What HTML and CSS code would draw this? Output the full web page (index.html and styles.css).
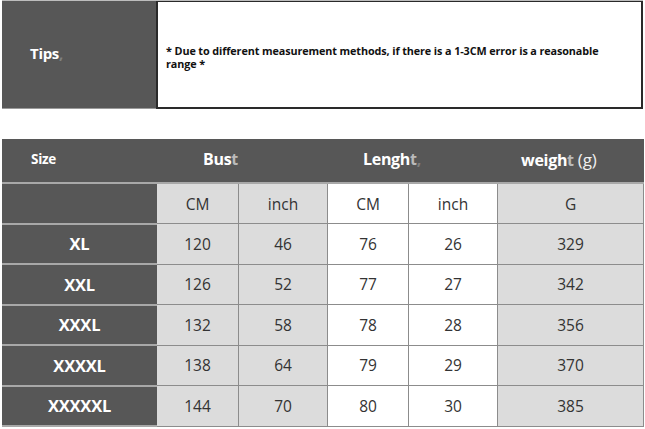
FILE: index.html
```html
<!DOCTYPE html>
<html>
<head>
<meta charset="utf-8">
<link rel="stylesheet" href="styles.css">
</head>
<body>
<div class="page">
  <div class="tips">
    <div class="tips-label">Tips<span class="faint">,</span></div>
    <div class="tips-text">* Due to different measurement methods, if there is a 1-3CM error is a reasonable range *</div>
  </div>
  <table class="chart">
    <colgroup>
      <col class="c-size"><col class="c-cm"><col class="c-in"><col class="c-cm2"><col class="c-in2"><col class="c-g">
    </colgroup>
    <tr class="head">
      <th class="size-h">Size</th>
      <th colspan="2" class="grp bust">Bus<span class="fade">t</span></th>
      <th colspan="2" class="grp len">Lengh<span class="fade">t</span><span class="faint">,</span></th>
      <th class="grp wt">weigh<span class="fade">t</span> <span class="unit">(g)</span></th>
    </tr>
    <tr>
      <td class="sz"></td><td class="grey">CM</td><td class="grey">inch</td><td class="white">CM</td><td class="white">inch</td><td class="grey">G</td>
    </tr>
    <tr>
      <td class="sz">XL</td><td class="grey">120</td><td class="grey">46</td><td class="white">76</td><td class="white">26</td><td class="grey">329</td>
    </tr>
    <tr>
      <td class="sz">XXL</td><td class="grey">126</td><td class="grey">52</td><td class="white">77</td><td class="white">27</td><td class="grey">342</td>
    </tr>
    <tr>
      <td class="sz">XXXL</td><td class="grey">132</td><td class="grey">58</td><td class="white">78</td><td class="white">28</td><td class="grey">356</td>
    </tr>
    <tr>
      <td class="sz">XXXXL</td><td class="grey">138</td><td class="grey">64</td><td class="white">79</td><td class="white">29</td><td class="grey">370</td>
    </tr>
    <tr>
      <td class="sz">XXXXXL</td><td class="grey">144</td><td class="grey">70</td><td class="white">80</td><td class="white">30</td><td class="grey">385</td>
    </tr>
  </table>
</div>
</body>
</html>
```

FILE: styles.css
```css
html, body {
  margin: 0;
  padding: 0;
  background: #ffffff;
}
body {
  font-family: "Open Sans", "Noto Sans", "DejaVu Sans", sans-serif;
  color: #333333;
}
.page {
  width: 645px;
  height: 429px;
  padding: 0 2px 0 2px;
  box-sizing: border-box;
  overflow: hidden;
}
.tips {
  display: grid;
  grid-template-columns: 154px 1fr;
  height: 109px;
  border-top: 1px solid #bdbdbd;
  box-sizing: border-box;
}
.tips-label {
  background: #575757;
  color: #ffffff;
  font-weight: 700;
  font-size: 15px;
  letter-spacing: -0.3px;
  display: flex;
  align-items: center;
  padding-left: 28px;
  padding-bottom: 4px;
  border-bottom: 1px solid #9a9a9a;
}
.tips-text {
  border: 2px solid #2a2a2a;
  border-top-width: 1px;
  background: #ffffff;
  color: #111111;
  font-weight: 700;
  font-size: 10.8px;
  line-height: 13px;
  letter-spacing: -0.1px;
  padding: 42px 30px 0 8px;
  box-sizing: border-box;
}
.faint {
  color: rgba(255, 255, 255, 0.25);
}
.fade {
  color: rgba(255, 255, 255, 0.6);
}
.chart {
  margin-top: 30px;
  border-collapse: collapse;
  table-layout: fixed;
  width: 641px;
}
.c-size { width: 154px; }
.c-cm { width: 82px; }
.c-in { width: 89px; }
.c-cm2 { width: 81px; }
.c-in2 { width: 89px; }
.c-g { width: 146px; }
.chart td, .chart th {
  padding: 0;
  text-align: center;
  height: 38.5px;
  font-size: 15.5px;
  font-weight: 400;
  border: 1px solid #8c8c8c;
}
.head th {
  height: 38px;
  padding-bottom: 4px;
  background: #575757;
  color: #ffffff;
  font-weight: 700;
  font-size: 16px;
  letter-spacing: -0.3px;
  border-color: #575757;
  border-bottom: 2px solid #a8a8a8;
}
.head .size-h {
  text-align: left;
  padding-left: 28px;
  font-size: 13.5px;
}
.head .bust {
  text-align: left;
  padding-left: 46px;
}
.head .len {
  text-align: left;
  padding-left: 35px;
}
.head .wt {
  text-align: left;
  padding-left: 23px;
}
.unit {
  font-weight: 400;
  font-size: 17px;
  color: #f0f0f0;
  letter-spacing: 0;
}
.chart td.sz {
  background: #575757;
  color: #ffffff;
  font-weight: 700;
  font-size: 16.5px;
  letter-spacing: -0.2px;
  border-left-color: #575757;
  border-top: 2px solid #a8a8a8;
  border-bottom: 2px solid #a8a8a8;
  border-right: 1px solid #575757;
}
.grey {
  background: #dcdcdc;
}
.white {
  background: #ffffff;
}
```
